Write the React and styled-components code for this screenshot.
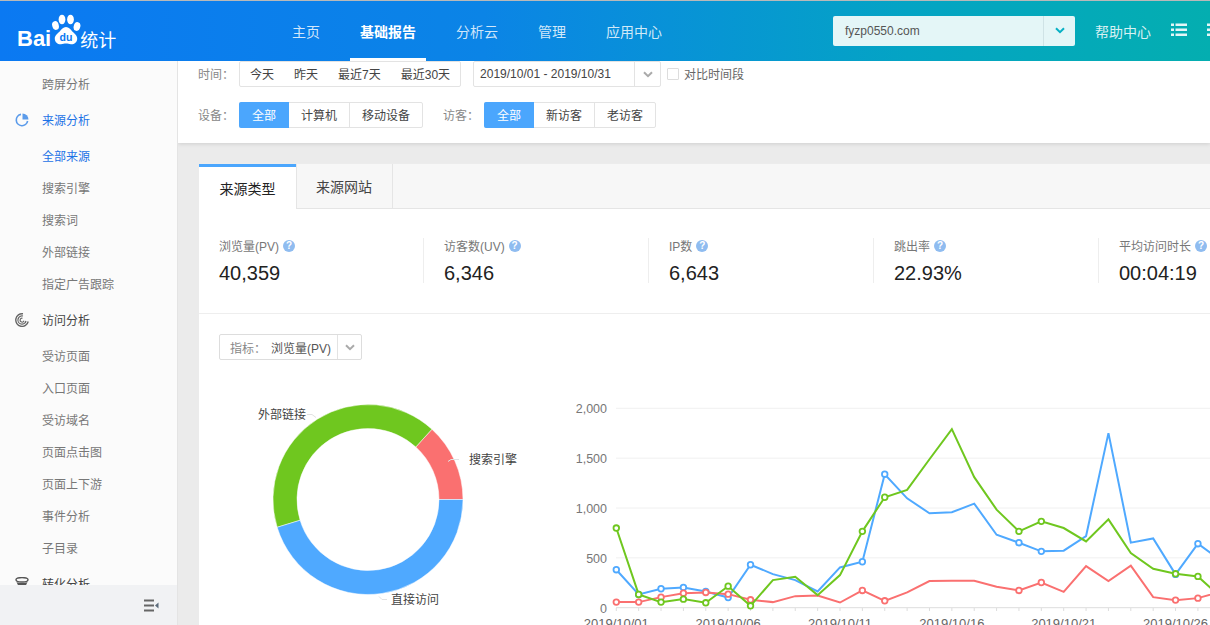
import React from "react";
import styled, { createGlobalStyle } from "styled-components";

const GlobalStyle = createGlobalStyle`
  html, body {
    margin: 0;
    height: 625px;
    overflow: hidden;
    background: #ebebeb;
    font-family: "Liberation Sans", "Noto Sans CJK SC", sans-serif;
    font-size: 12px;
  }
`;

const Page = styled.div`
  width: 1210px;
  height: 625px;
  display: flex;
  flex-direction: column;
  overflow: hidden;
`;

const Header = styled.header`
  flex: none;
  height: 60px;
  border-top: 1px solid #b9b9b9;
  display: flex;
  align-items: stretch;
  background: linear-gradient(90deg, #0b79f2 0%, #0b84e6 40%, #04a4c4 75%, #04aeb0 100%);
  overflow: hidden;
`;

const Logo = styled.div`
  flex: none;
  width: 282px;
  padding-left: 17px;
  box-sizing: border-box;
  display: flex;
  align-items: center;
  color: #fff;
`;

const LogoWord = styled.span`
  font-size: 22px;
  font-weight: 700;
  margin-top: 15px;
`;

const LogoCn = styled.span`
  font-size: 18px;
  margin: 15px 0 0 -1px;
`;

const Nav = styled.nav`
  display: flex;
  gap: 20px;
  width: 551px;
  flex: none;
`;

const NavItem = styled.a`
  padding: 0 10px;
  display: flex;
  align-items: center;
  font-size: 14px;
  color: ${(p) => (p.$active ? "#fff" : "rgba(255,255,255,.82)")};
  font-weight: ${(p) => (p.$active ? 700 : 400)};
  border-bottom: 3px solid ${(p) => (p.$active ? "#fff" : "transparent")};
  padding-top: 3px;
`;

const SiteSelect = styled.div`
  flex: none;
  align-self: center;
  width: 242px;
  height: 30px;
  margin-top: -1px;
  border-radius: 2px;
  background: #e4f6f7;
  display: flex;
  align-items: center;
  color: #555;
`;

const SiteName = styled.span`
  flex: 1;
  padding-left: 12px;
`;

const SiteCaret = styled.span`
  flex: none;
  width: 31px;
  height: 30px;
  border-left: 1px solid #cfe3e6;
  display: flex;
  align-items: center;
  justify-content: center;
`;

const HelpLink = styled.a`
  flex: none;
  margin-left: 20px;
  align-self: center;
  margin-top: -1px;
  font-size: 14px;
  color: rgba(255, 255, 255, 0.85);
`;

const HeaderIcon = styled.span`
  flex: none;
  margin-left: 20px;
  display: flex;
  align-self: center;
  margin-top: -2px;
`;

const Body = styled.div`
  flex: 1;
  min-height: 0;
  display: flex;
`;

const Sidebar = styled.aside`
  flex: none;
  width: 178px;
  box-sizing: border-box;
  border-right: 1px solid #e4e4e4;
  background: #fbfbfb;
  display: flex;
  flex-direction: column;
`;

const SideNav = styled.div`
  flex: 1;
  min-height: 0;
  overflow: hidden;
  padding-top: 8px;
`;

const SideGroup = styled.div`
  height: 40px;
  box-sizing: border-box;
  display: flex;
  align-items: center;
  padding: 0 0 3px 15px;
  gap: 13px;
  color: ${(p) => (p.$active ? "#1c72e6" : "#444")};
`;

const SideItem = styled.div`
  height: 32px;
  line-height: 32px;
  padding-left: 42px;
  color: ${(p) => (p.$active ? "#1c72e6" : "#777")};
`;

const SideFooter = styled.div`
  flex: none;
  height: 40px;
  background: #f1f2f4;
  display: flex;
  align-items: center;
  justify-content: flex-end;
  padding-right: 18px;
`;

const Main = styled.main`
  flex: 1;
  min-width: 0;
  overflow: hidden;
`;

const FilterPanel = styled.div`
  background: #fff;
  padding: 0 20px 15px;
  display: flex;
  flex-direction: column;
  gap: 15px;
  box-shadow: 0 1px 4px rgba(0, 0, 0, 0.12);
`;

const FilterRow = styled.div`
  display: flex;
  align-items: center;
  height: 26px;
`;

const FilterLabel = styled.span`
  flex: none;
  width: 41px;
  padding-bottom: 2px;
  color: #888;
`;

const Segments = styled.div`
  flex: none;
  display: flex;
  height: 26px;
  box-sizing: border-box;
  border: 1px solid #e3e3e3;
  border-radius: 2px;
  margin-right: ${(p) => p.$gap || 0}px;
`;

const Segment = styled.span`
  display: flex;
  align-items: center;
  box-sizing: border-box;
  padding: 0 ${(p) => (p.$plain ? 10 : 12)}px 2px;
  color: #444;
  border-left: ${(p) => (p.$divided ? "1px solid #e3e3e3" : "none")};
  ${(p) =>
    p.$active &&
    `
    background: #4ba6fd;
    color: #fff;
    margin: -1px 0 -1px -1px;
    padding: 0 13px 2px;
    border-radius: 2px 0 0 2px;
  `}
`;

const DatePicker = styled.div`
  flex: none;
  width: 188px;
  height: 26px;
  margin-left: 12px;
  box-sizing: border-box;
  border: 1px solid #e3e3e3;
  border-radius: 2px;
  display: flex;
  align-items: center;
  color: #444;
`;

const DateText = styled.span`
  flex: 1;
  padding-left: 6px;
`;

const CaretBox = styled.span`
  flex: none;
  width: ${(p) => p.$width}px;
  height: 24px;
  box-sizing: border-box;
  border-left: 1px solid #e3e3e3;
  display: flex;
  align-items: center;
  justify-content: center;
`;

const CheckBox = styled.span`
  flex: none;
  width: 10px;
  height: 10px;
  margin: 0 5px 0 6px;
  border: 1px solid #ddd;
  border-radius: 1px;
`;

const CheckLabel = styled.span`
  padding-bottom: 2px;
  color: #666;
`;

const Card = styled.section`
  width: 1125px;
  margin: 20px 0 0 21px;
  background: #fff;
`;

const Tabs = styled.div`
  display: flex;
  height: 46px;
  box-sizing: border-box;
  background: #f7f7f7;
  border-top: 1px solid #ececec;
  border-bottom: 1px solid #e5e5e5;
`;

const Tab = styled.div`
  width: 97px;
  box-sizing: border-box;
  display: flex;
  align-items: center;
  justify-content: center;
  font-size: 14px;
  color: ${(p) => (p.$active ? "#222" : "#444")};
  background: ${(p) => (p.$active ? "#fff" : "transparent")};
  border-right: ${(p) => (p.$active ? "none" : "1px solid #e5e5e5")};
  border-top: ${(p) => (p.$active ? "3px solid #4ba6fd" : "none")};
  margin-bottom: ${(p) => (p.$active ? "-1px" : 0)};
  box-shadow: ${(p) => (p.$active ? "1px 0 0 #e5e5e5" : "none")};
`;

const Stats = styled.div`
  display: flex;
  height: 105px;
  box-sizing: border-box;
  padding-top: 29px;
  border-bottom: 1px solid #eee;
`;

const Stat = styled.div`
  flex: none;
  width: 225px;
  height: 45px;
  box-sizing: border-box;
  padding-left: 20px;
  border-right: 1px solid #eee;
`;

const StatLabel = styled.div`
  display: flex;
  align-items: center;
  gap: 4px;
  height: 15px;
  color: #777;
`;

const HelpDot = styled.span`
  width: 12px;
  height: 12px;
  border-radius: 50%;
  background: #8fbcf0;
  color: #fff;
  font-size: 10px;
  font-weight: 700;
  line-height: 12px;
  text-align: center;
`;

const StatValue = styled.div`
  margin-top: 6px;
  font-size: 20px;
  line-height: 28px;
  color: #222;
`;

const MetricSelect = styled.div`
  width: 143px;
  height: 26px;
  margin: 20px 0 20px 20px;
  box-sizing: border-box;
  border: 1px solid #ddd;
  border-radius: 2px;
  display: flex;
  align-items: center;
  color: #555;
`;

const MetricLabel = styled.span`
  flex: none;
  padding-left: 10px;
  width: 51px;
  box-sizing: border-box;
  color: #888;
`;

const MetricValue = styled.span`
  flex: 1;
`;

const Charts = styled.div`
  display: flex;
  padding-left: 20px;
`;

const Chevron = ({ color = "#aaa", width = 10 }) => (
  <svg width={width} height={width * 0.7} viewBox="0 0 10 7">
    <path d="M1 1.2 5 5.2 9 1.2" fill="none" stroke={color} strokeWidth="2" />
  </svg>
);

const Paw = () => (
  <svg width="30" height="32" viewBox="0 0 30 32" style={{ marginTop: -2 }}>
    <ellipse cx="4.5" cy="11.5" rx="3.3" ry="4.4" fill="#fff" transform="rotate(-15 4.5 11.5)" />
    <ellipse cx="11" cy="5.5" rx="3.4" ry="4.8" fill="#fff" />
    <ellipse cx="19.5" cy="5.5" rx="3.4" ry="4.8" fill="#fff" />
    <ellipse cx="26" cy="12.5" rx="3.3" ry="4.4" fill="#fff" transform="rotate(15 26 12.5)" />
    <path
      d="M15 13c-3 0-4.4 2.400-6.300 4.400C6.500 19.600 3.500 21.300 3.800 25c.3 3.600 3.200 5.500 6.200 5.200 1.900-.2 3.300-.6 5-.6s3.100.4 5 .6c3 .3 5.900-1.600 6.200-5.200.3-3.700-2.700-5.400-4.900-7.600C19.400 15.400 18 13 15 13z"
      fill="#fff"
    />
    <text x="15" y="27" textAnchor="middle" fontSize="10.500" fontWeight="700" fill="#0b79f2">
      du
    </text>
  </svg>
);

const ListIcon = () => (
  <svg width="16" height="14" viewBox="0 0 16 14">
    <g fill="#e4f6f7">
      <rect x="0" y="0.500" width="3" height="2.500" />
      <rect x="4.500" y="0.500" width="11.500" height="2.500" />
      <rect x="0" y="5.500" width="3" height="2.500" />
      <rect x="4.500" y="5.500" width="11.500" height="2.500" />
      <rect x="0" y="10.500" width="3" height="2.500" />
      <rect x="4.500" y="10.500" width="11.500" height="2.500" />
    </g>
  </svg>
);

const PieIcon = () => (
  <svg width="14" height="14" viewBox="0 0 14 14">
    <path d="M6 1.400A5.700 5.700 0 1 0 12.600 8" fill="none" stroke="#5b9bea" strokeWidth="1.600" />
    <path d="M7.500 0.500A6 6 0 0 1 13.500 6.500H7.500z" fill="#5b9bea" />
  </svg>
);

const VisitIcon = () => (
  <svg width="14" height="14" viewBox="0 0 14 14" fill="none" stroke="#666">
    <path d="M8 0.800A6.300 6.300 0 1 0 13.200 8.500" strokeWidth="1.400" />
    <path d="M8 3A4.100 4.100 0 1 0 11 8" strokeWidth="1.200" />
    <path d="M7.500 5.200A2 2 0 1 0 9 7.800" strokeWidth="1.100" />
  </svg>
);

const FunnelIcon = () => (
  <svg width="14" height="14" viewBox="0 0 14 14">
    <ellipse cx="7" cy="2.800" rx="6" ry="2.200" fill="none" stroke="#555" strokeWidth="1.400" />
    <path d="M1.500 5 5 12.500h4L12.500 5c-3 1.200-8 1.200-11 0z" fill="#555" />
  </svg>
);

const CollapseIcon = () => (
  <svg width="15" height="13" viewBox="0 0 15 13">
    <g fill="#666">
      <rect x="0" y="0.500" width="10" height="2" />
      <rect x="0" y="5.500" width="10" height="2" />
      <rect x="0" y="10.500" width="10" height="2" />
    </g>
    <path d="M14.500 3.500v6L11 6.500z" fill="#5a6a7a" />
  </svg>
);

// 饼图：中心 (149, 119.500)，从 3 点钟方向逆时针
const polar = (deg, r) => {
  const a = (deg * Math.PI) / 180;
  return [149 + r * Math.cos(a), 119.5 - r * Math.sin(a)];
};

const ringPath = (from, to) => {
  const [x1, y1] = polar(from, 95);
  const [x2, y2] = polar(to, 95);
  const [x3, y3] = polar(to, 71);
  const [x4, y4] = polar(from, 71);
  const large = to - from > 180 ? 1 : 0;
  return `M${x1} ${y1}A95 95 0 ${large} 0 ${x2} ${y2}L${x3} ${y3}A71 71 0 ${large} 1 ${x4} ${y4}Z`;
};

const pieSlices = [
  { from: 0, to: 47.7, color: "#fa7070" },
  { from: 47.7, to: 197, color: "#6fc71f" },
  { from: 197, to: 360, color: "#4fa9ff" },
];

const PieChart = () => (
  <svg width="341" height="250" style={{ flex: "none" }}>
    {pieSlices.map((s) => (
      <path key={s.color} d={ringPath(s.from, s.to)} fill={s.color} stroke="#fff" strokeWidth="0.500" />
    ))}
    <g fill="none" stroke="#e2e2e2">
      <path d="M88 34.500h5l4 3" />
      <path d="M240 79.500h-8l-3 2" />
      <path d="M168 219.500h-5l-3-3" />
    </g>
    <g fontSize="12" fill="#444">
      <text x="39" y="39">外部链接</text>
      <text x="250" y="84">搜索引擎</text>
      <text x="172" y="224">直接访问</text>
    </g>
  </svg>
);

const blueLine = [379, 131, 188, 201, 161, 100, 429, 335, 275, 161, 402, 459, 1337, 1095, 945, 955, 1042, 730, 650, 563, 570, 717, 1749, 650, 693, 332, 640, 476];
const greenLine = [797, 131, 54, 84, 47, 214, 17, 275, 308, 124, 325, 764, 1106, 1179, 1487, 1789, 1307, 982, 764, 864, 797, 663, 884, 546, 389, 338, 312, 107];
const redLine = [54, 54, 104, 144, 151, 134, 77, 54, 114, 121, 50, 171, 67, 151, 265, 268, 268, 208, 171, 251, 157, 415, 265, 419, 104, 74, 94, 157];
const markerDays = [0, 1, 2, 3, 4, 5, 6, 11, 12, 18, 19, 25, 26];

const xAt = (i) => 56.3 + i * 22.37;
const yAt = (v) => 227.5 - v * 0.0997;

const series = [
  { name: "blue", color: "#4fa9ff", data: blueLine },
  { name: "red", color: "#fa7070", data: redLine },
  { name: "green", color: "#6fc71f", data: greenLine },
];

const LineChart = () => (
  <svg width="690" height="250" style={{ flex: "none" }}>
    {[0, 500, 1000, 1500, 2000].map((v) => (
      <g key={v}>
        <line x1="56" x2="690" y1={yAt(v) + 0.2} y2={yAt(v) + 0.2} stroke={v === 0 ? "#ddd" : "#f0f0f0"} />
        <text x="47" y={yAt(v) + 5} textAnchor="end" fontSize="12.500" fill="#777">
          {v.toLocaleString("en-US")}
        </text>
      </g>
    ))}
    {blueLine.map((_, i) => (
      <line key={i} x1={xAt(i)} x2={xAt(i)} y1="228" y2="231" stroke="#ddd" />
    ))}
    {[0, 5, 10, 15, 20, 25].map((i) => (
      <text key={i} x={xAt(i)} y="247.500" textAnchor="middle" fontSize="13" fill="#666">
        {`2019/10/${String(i + 1).padStart(2, "0")}`}
      </text>
    ))}
    {series.map((s) => (
      <g key={s.name}>
        <polyline
          points={s.data.map((v, i) => `${xAt(i)},${yAt(v)}`).join(" ")}
          fill="none"
          stroke={s.color}
          strokeWidth="2"
        />
        {markerDays.map((i) => (
          <circle key={i} cx={xAt(i)} cy={yAt(s.data[i])} r="2.800" fill="#fff" stroke={s.color} strokeWidth="1.800" />
        ))}
      </g>
    ))}
  </svg>
);

const navItems = ["主页", "基础报告", "分析云", "管理", "应用中心"];

const statItems = [
  { label: "浏览量(PV)", value: "40,359" },
  { label: "访客数(UV)", value: "6,346" },
  { label: "IP数", value: "6,643" },
  { label: "跳出率", value: "22.93%" },
  { label: "平均访问时长", value: "00:04:19" },
];

export default function App() {
  return (
    <Page>
      <GlobalStyle />
      <Header>
        <Logo>
          <LogoWord>Bai</LogoWord>
          <Paw />
          <LogoCn>统计</LogoCn>
        </Logo>
        <Nav>
          {navItems.map((item) => (
            <NavItem key={item} $active={item === "基础报告"}>
              {item}
            </NavItem>
          ))}
        </Nav>
        <SiteSelect>
          <SiteName>fyzp0550.com</SiteName>
          <SiteCaret>
            <Chevron color="#06b0c4" />
          </SiteCaret>
        </SiteSelect>
        <HelpLink>帮助中心</HelpLink>
        <HeaderIcon>
          <ListIcon />
        </HeaderIcon>
        <HeaderIcon>
          <ListIcon />
        </HeaderIcon>
      </Header>
      <Body>
        <Sidebar>
          <SideNav>
            <SideItem>跨屏分析</SideItem>
            <SideGroup $active>
              <PieIcon />
              来源分析
            </SideGroup>
            <SideItem $active>全部来源</SideItem>
            <SideItem>搜索引擎</SideItem>
            <SideItem>搜索词</SideItem>
            <SideItem>外部链接</SideItem>
            <SideItem>指定广告跟踪</SideItem>
            <SideGroup>
              <VisitIcon />
              访问分析
            </SideGroup>
            <SideItem>受访页面</SideItem>
            <SideItem>入口页面</SideItem>
            <SideItem>受访域名</SideItem>
            <SideItem>页面点击图</SideItem>
            <SideItem>页面上下游</SideItem>
            <SideItem>事件分析</SideItem>
            <SideItem>子目录</SideItem>
            <SideGroup>
              <FunnelIcon />
              转化分析
            </SideGroup>
          </SideNav>
          <SideFooter>
            <CollapseIcon />
          </SideFooter>
        </Sidebar>
        <Main>
          <FilterPanel>
            <FilterRow>
              <FilterLabel>时间：</FilterLabel>
              <Segments>
                <Segment $plain>今天</Segment>
                <Segment $plain>昨天</Segment>
                <Segment $plain>最近7天</Segment>
                <Segment $plain>最近30天</Segment>
              </Segments>
              <DatePicker>
                <DateText>2019/10/01 - 2019/10/31</DateText>
                <CaretBox $width={26}>
                  <Chevron />
                </CaretBox>
              </DatePicker>
              <CheckBox />
              <CheckLabel>对比时间段</CheckLabel>
            </FilterRow>
            <FilterRow>
              <FilterLabel>设备：</FilterLabel>
              <Segments $gap={20}>
                <Segment $active>全部</Segment>
                <Segment>计算机</Segment>
                <Segment $divided>移动设备</Segment>
              </Segments>
              <FilterLabel>访客：</FilterLabel>
              <Segments>
                <Segment $active>全部</Segment>
                <Segment>新访客</Segment>
                <Segment $divided>老访客</Segment>
              </Segments>
            </FilterRow>
          </FilterPanel>
          <Card>
            <Tabs>
              <Tab $active>来源类型</Tab>
              <Tab>来源网站</Tab>
            </Tabs>
            <Stats>
              {statItems.map((s) => (
                <Stat key={s.label}>
                  <StatLabel>
                    {s.label}
                    <HelpDot>?</HelpDot>
                  </StatLabel>
                  <StatValue>{s.value}</StatValue>
                </Stat>
              ))}
            </Stats>
            <MetricSelect>
              <MetricLabel>指标：</MetricLabel>
              <MetricValue>浏览量(PV)</MetricValue>
              <CaretBox $width={24}>
                <Chevron />
              </CaretBox>
            </MetricSelect>
            <Charts>
              <PieChart />
              <LineChart />
            </Charts>
          </Card>
        </Main>
      </Body>
    </Page>
  );
}
